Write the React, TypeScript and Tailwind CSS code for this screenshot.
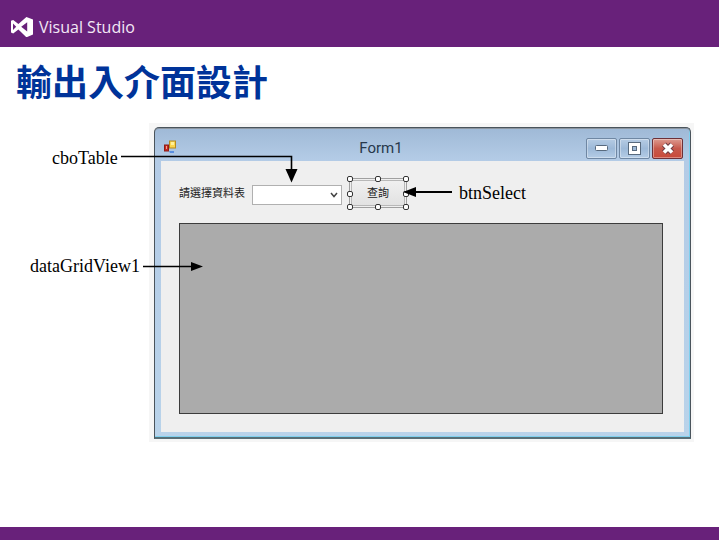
import type { ReactNode } from 'react';

const cjk = "font-['Liberation_Sans','Noto_Sans_CJK_TC',sans-serif]";
const serif = "font-['Liberation_Serif',serif]";

function VisualStudioLogo() {
  return (
    <svg width="22" height="20" viewBox="0 0 22 20" aria-hidden="true">
      <path
        fillRule="evenodd"
        fill="#fff"
        d="M0 3.8 2.2 2.9 7.4 7 15.4 0 22 2.400V17.600L15.400 20.300 7.400 12.500 2.200 16.600 0 15.600ZM2 6.600V13L5.200 9.800ZM16.200 5.200 10.200 9.800 16.200 14.600Z"
      />
    </svg>
  );
}

function FormIcon() {
  return (
    <svg width="12" height="14" viewBox="0 0 12 14" aria-hidden="true">
      <rect x=".5" y="5" width="4" height="6" fill="#c8281c" stroke="#8c1c18" />
      <rect x="2" y="6" width="1" height="3" fill="#f0a090" />
      <rect x="5.5" y="1" width="6" height="7" fill="#fbd64e" stroke="#b58a20" />
      <rect x="7" y="2" width="3" height="3" fill="#fff09a" />
      <path d="M5 11h5v2H6z" fill="#5a8fe0" />
    </svg>
  );
}

function CaptionButton({ label, danger, children }: { label: string; danger?: boolean; children: ReactNode }) {
  const tone = danger
    ? 'border-[#6d3038] bg-linear-to-b from-[#dc9a90] via-[#c7594c] via-50% to-[#c9493a]'
    : 'border-[#6f87a3] bg-linear-to-b from-[#b6cce4] via-[#9db9d8] via-50% to-[#b4cce6]';
  return (
    <button
      type="button"
      aria-label={label}
      className={`flex h-[21px] w-[31px] items-center justify-center rounded-[2px] border shadow-[inset_0_0_0_1px_rgba(255,255,255,0.35)] ${tone}`}
    >
      {children}
    </button>
  );
}

function Handle({ place }: { place: string }) {
  return <span className={`absolute size-[6px] rounded-[2px] border border-[#333] bg-white ${place}`} />;
}

function Form() {
  return (
    <section className="rounded-t-[5px] border border-b-2 border-[#4a545c] border-b-[#587078] bg-linear-to-b from-[#9fb9d6] via-[#b3cbe6] via-10% to-[#b9d3ea] px-[6px] pb-[5px] shadow-[inset_0_1px_0_#8c959f,inset_-1px_-1px_0_#7fd0ee]">
      <header className="flex h-[33px] items-start gap-2 pt-[10px] pl-[3px]">
        <div className="pt-[2px]">
          <FormIcon />
        </div>
        <h2 className="flex-1 text-center font-['Roboto',sans-serif] text-[15px] leading-5 text-[#27384c]">Form1</h2>
        <div className="flex gap-[2px] pr-px">
          <CaptionButton label="Minimize">
            <svg width="13" height="7" viewBox="0 0 13 7">
              <rect x=".5" y=".5" width="12" height="5" rx="1" fill="#fff" stroke="#586a7e" />
            </svg>
          </CaptionButton>
          <CaptionButton label="Maximize">
            <svg width="13" height="13" viewBox="0 0 13 13">
              <rect x="2.500" y="2.500" width="8" height="8" fill="none" stroke="#586a7e" strokeWidth="5" />
              <rect x="2.500" y="2.500" width="8" height="8" fill="none" stroke="#fff" strokeWidth="3" />
            </svg>
          </CaptionButton>
          <CaptionButton label="Close" danger>
            <svg width="14" height="13" viewBox="0 0 14 13">
              <path d="M3 2.5 11 10.5M11 2.5 3 10.5" stroke="#6a3a40" strokeWidth="5.500" />
              <path d="M3 2.5 11 10.5M11 2.5 3 10.5" stroke="#fff" strokeWidth="3.6" />
            </svg>
          </CaptionButton>
        </div>
      </header>
      <div className="bg-[#efefef] px-[18px] pt-[16px] pb-[18px]">
        <div className={`flex h-[32px] items-center ${cjk}`}>
          <label htmlFor="cboTable" className="w-[73px] text-[11px] text-[#222]">
            請選擇資料表
          </label>
          <div className="relative mt-[4px]">
            <select
              id="cboTable"
              className="block h-[20px] w-[90px] appearance-none border border-[#b0b0b0] bg-white"
            />
            <svg className="pointer-events-none absolute top-[7px] right-[4px]" width="8" height="6" viewBox="0 0 8 6">
              <path d="M1 1 4 4.5 7 1" fill="none" stroke="#444" strokeWidth="1.5" />
            </svg>
          </div>
          <div className="relative ml-[7px] border border-[#a0a0a0] p-px">
            <button
              type="button"
              className="block h-[26px] w-[54px] border border-[#b8b8b8] bg-linear-to-b from-[#f0f0f0] to-[#e2e2e2] text-[11px] leading-none text-[#222]"
            >
              查詢
            </button>
            <Handle place="-top-[3px] -left-[3px]" />
            <Handle place="-top-[3px] left-[25px]" />
            <Handle place="-top-[3px] -right-[3px]" />
            <Handle place="top-[12px] -left-[3px]" />
            <Handle place="top-[12px] -right-[3px]" />
            <Handle place="-bottom-[3px] -left-[3px]" />
            <Handle place="-bottom-[3px] left-[25px]" />
            <Handle place="-right-[3px] -bottom-[3px]" />
          </div>
          <span className={`ml-[52px] text-lg text-black ${serif}`}>btnSelect</span>
        </div>
        <div className="mt-[14px] mr-[3px] h-[191px] border border-[#3c3c3c] bg-[#ababab]" />
      </div>
    </section>
  );
}

function Arrows() {
  return (
    <svg className="pointer-events-none absolute top-0 left-0" width="460" height="160" viewBox="0 0 460 160" aria-hidden="true">
      <path d="M121 33.5H291.5V48" fill="none" stroke="#000" strokeWidth="1.6" />
      <path d="M285.5 46h12l-6 13.500z" />
      <path d="M452 69H415" stroke="#000" strokeWidth="2" />
      <path d="M403 69l13-5v10z" />
      <path d="M143 143.5H192" stroke="#000" strokeWidth="1.4" />
      <path d="M203 143.5l-12-4.500v9z" />
    </svg>
  );
}

export default function App() {
  return (
    <div className="flex min-h-screen flex-col bg-white pr-px">
      <header className="flex h-[47px] items-center gap-[6px] bg-[#68217a] pt-[6px] pl-[11px]">
        <VisualStudioLogo />
        <span className="font-['Open_Sans',sans-serif] text-base leading-5 text-[#f3e8f6]">Visual Studio</span>
      </header>
      <h1 className="pt-[7px] pb-[17px] pl-[16px] font-['Noto_Sans_CJK_TC',sans-serif] text-4xl leading-[52px] font-bold text-[#003399]">
        輸出入介面設計
      </h1>
      <main className="relative flex flex-1 pr-[25px]">
        <div className={`w-[149px] shrink-0 text-lg leading-6 text-black ${serif}`}>
          <p className="pt-[23px] pl-[52px]">cboTable</p>
          <p className="pt-[84px] pl-[30px]">dataGridView1</p>
        </div>
        <div className="min-w-0 flex-1 self-start bg-[#f6f6f6] pt-[4px] pr-[3px] pb-[3px] pl-[5px]">
          <Form />
        </div>
        <Arrows />
      </main>
      <footer className="h-[13px] bg-[#68217a]" />
    </div>
  );
}
